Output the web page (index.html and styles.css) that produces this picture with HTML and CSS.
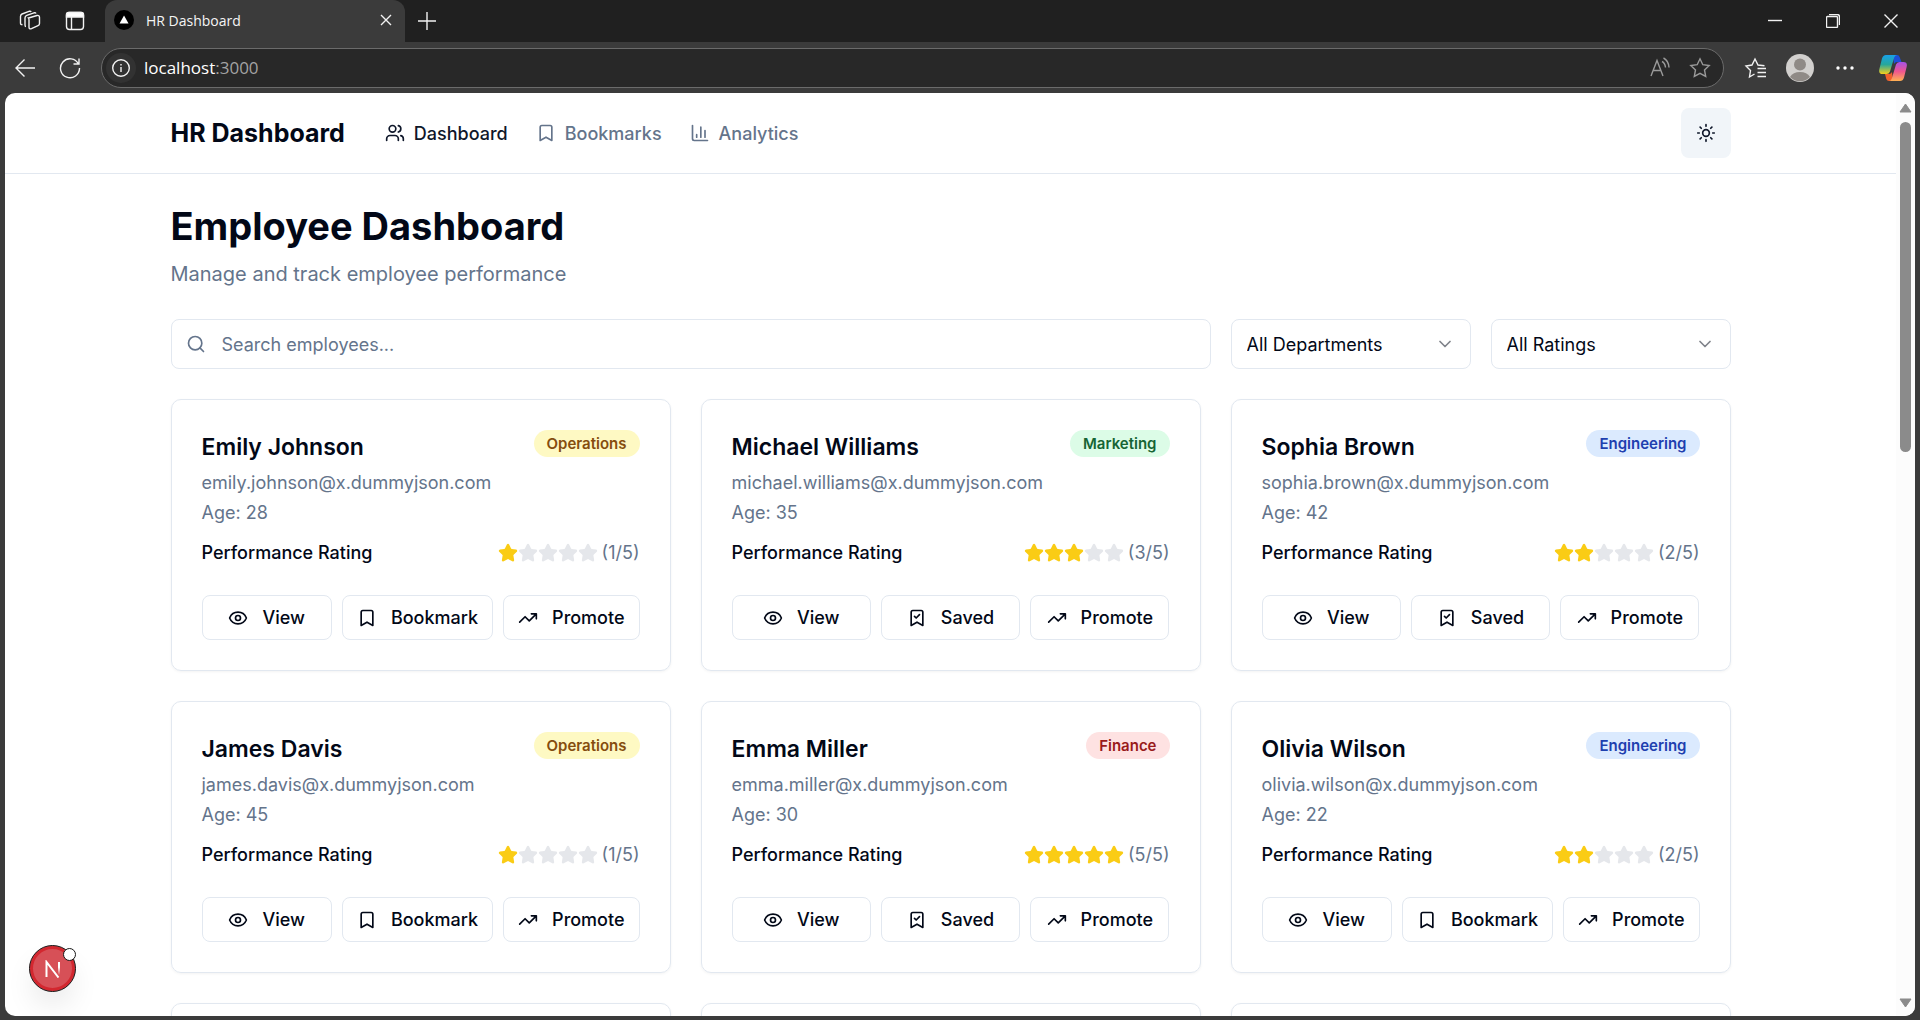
FILE: index.html
```html
<!DOCTYPE html>
<html lang="en">
<head>
<meta charset="utf-8">
<title>HR Dashboard</title>
<link rel="stylesheet" href="styles.css">
</head>
<body>
<svg class="sprite" aria-hidden="true">
  <symbol id="users" viewBox="0 0 24 24"><path d="M16 21v-2a4 4 0 0 0-4-4H6a4 4 0 0 0-4 4v2"/><circle cx="9" cy="7" r="4"/><path d="M22 21v-2a4 4 0 0 0-3-3.87M16 3.13a4 4 0 0 1 0 7.75"/></symbol>
  <symbol id="bookmark" viewBox="0 0 24 24"><path d="m19 21-7-4-7 4V5a2 2 0 0 1 2-2h10a2 2 0 0 1 2 2v16z"/></symbol>
  <symbol id="saved" viewBox="0 0 24 24"><path d="m19 21-7-4-7 4V5a2 2 0 0 1 2-2h10a2 2 0 0 1 2 2zM9 10l2 2 4-4"/></symbol>
  <symbol id="chart" viewBox="0 0 24 24"><path d="M3 3v16a2 2 0 0 0 2 2h16M18 17V9M13 17V5M8 17v-3"/></symbol>
  <symbol id="sun" viewBox="0 0 24 24"><circle cx="12" cy="12" r="4"/><path d="M12 2v2M12 20v2M4.93 4.93l1.41 1.41M17.66 17.66l1.41 1.41M2 12h2M20 12h2M6.34 17.66l-1.41 1.41M19.07 4.93l-1.41 1.41"/></symbol>
  <symbol id="search" viewBox="0 0 24 24"><circle cx="11" cy="11" r="8"/><path d="m21 21-4.3-4.3"/></symbol>
  <symbol id="chevron" viewBox="0 0 24 24"><path d="m6 9 6 6 6-6"/></symbol>
  <symbol id="eye" viewBox="0 0 24 24"><path d="M2.06 12.35a1 1 0 0 1 0-.7 10.75 10.75 0 0 1 19.88 0 1 1 0 0 1 0 .7 10.75 10.75 0 0 1-19.88 0"/><circle cx="12" cy="12" r="3"/></symbol>
  <symbol id="trend" viewBox="0 0 24 24"><path d="M22 7l-8.5 8.5-5-5L2 17M16 7h6v6"/></symbol>
  <symbol id="star" viewBox="0 0 24 24"><path d="M11.53 2.3a.53.53 0 0 1 .95 0l2.31 4.67a2.12 2.12 0 0 0 1.6 1.17l5.16.75a.53.53 0 0 1 .29.91l-3.73 3.63a2.12 2.12 0 0 0-.61 1.88l.88 5.14a.53.53 0 0 1-.77.56l-4.62-2.43a2.12 2.12 0 0 0-1.97 0L6.4 21.01a.53.53 0 0 1-.77-.56l.88-5.14a2.12 2.12 0 0 0-.61-1.88L2.16 9.8a.53.53 0 0 1 .3-.91l5.16-.76a2.12 2.12 0 0 0 1.6-1.16z"/></symbol>
</svg>

<div class="tabstrip">
  <button class="chrome-btn workspaces" aria-label="Workspaces"><svg viewBox="0 0 22 22"><path d="M9.500 8l8.500-2.500q2.500-.6 2.500 2v6q0 1.500-1.500 2.200l-6.500 3q-2.500.8-2.500-1.800v-7q0-1.500-.5-1.900zM7 16.500q-1 0-1-1.500V8q0-2 1.800-2.700L15 2.800q1.500-.4 2 .7M3.500 14.500Q1.500 15 1.500 13V6.500q0-1.800 1.500-2.500l7-2.700q1.500-.4 2.300.5"/></svg></button>
  <button class="chrome-btn" aria-label="Tab actions"><svg viewBox="0 0 22 22"><rect x="2.500" y="2.500" width="17" height="17" rx="3"/><path d="M2.500 4.500q0-2 2-2h13q2 0 2 2V7h-17z" fill="#fff"/><path d="M7.500 7v12"/></svg></button>
  <div class="tab">
    <svg class="favicon" viewBox="0 0 20 20"><circle cx="10" cy="10" r="10"/><path d="M10 5.500l4.500 8h-9z" fill="#fff"/></svg>
    <span class="tab-title">HR Dashboard</span>
    <button class="chrome-btn small" aria-label="Close tab"><svg viewBox="0 0 12 12"><path d="M1 1l10 10M11 1L1 11"/></svg></button>
  </div>
  <button class="chrome-btn plus" aria-label="New tab"><svg viewBox="0 0 18 18"><path d="M9 0v18M0 9h18"/></svg></button>
  <div class="window-controls">
    <button class="chrome-btn tiny" aria-label="Minimize"><svg viewBox="0 0 14 14"><path d="M0 6.500h14"/></svg></button>
    <button class="chrome-btn tiny" aria-label="Restore"><svg viewBox="0 0 14 14"><rect x=".5" y="2.500" width="11" height="11" rx="1"/><path d="M3 .5h8q2.500 0 2.500 2.500v8"/></svg></button>
    <button class="chrome-btn tiny" aria-label="Close"><svg viewBox="0 0 14 14"><path d="M.5.5l13 13M13.500.5l-13 13"/></svg></button>
  </div>
</div>

<div class="toolbar">
  <button class="chrome-btn back" aria-label="Back"><svg viewBox="0 0 22 22"><path d="M21 11H2M10.500 2.500L2 11l8.500 8.500"/></svg></button>
  <button class="chrome-btn" aria-label="Refresh"><svg viewBox="0 0 22 22"><path d="M19.500 7A9.500 9.500 0 1 0 20.500 11M20 1.500V7h-5.500"/></svg></button>
  <div class="address">
    <span class="site-info"><svg viewBox="0 0 18 18"><circle cx="9" cy="9" r="8.300"/><path d="M9 8v5M9 5v1.500"/></svg></span>
    <span class="url">localhost<span class="port">:3000</span></span>
    <button class="chrome-btn dim" aria-label="Read aloud"><svg viewBox="0 0 22 22"><path d="M2 19L8 3.500 14 19M4.200 13.500h7.600M13 4.500q3 1.500 3.500 6M14.500 1q5 2.500 5.500 9.500"/></svg></button>
    <button class="chrome-btn dim" aria-label="Add to favorites"><svg viewBox="0 0 22 22"><path d="M11 1.800l2.800 5.900 6.400.8-4.700 4.500 1.200 6.400L11 16.300l-5.700 3.100L6.500 13 1.800 8.500l6.400-.8z"/></svg></button>
  </div>
  <button class="chrome-btn" aria-label="Favorites"><svg viewBox="0 0 22 22"><path d="M10.500 17l-5 3 1-6.500L2 9l6-1 3-6 3 6 6.500.8M13.500 11.500H22M13.500 15.500H22M13.500 19.500H22"/></svg></button>
  <button class="chrome-btn avatar" aria-label="Profile"><svg viewBox="0 0 28 28"><circle cx="14" cy="14" r="14" fill="#d2d0ce"/><circle cx="14" cy="10.500" r="6" fill="#8f8a86"/><path d="M4 23q3-5 10-5t10 5a14 14 0 0 1-20 0z" fill="#8f8a86"/></svg></button>
  <button class="chrome-btn" aria-label="Settings and more"><svg viewBox="0 0 22 22"><g fill="#fff" stroke="none"><circle cx="4" cy="11" r="1.700"/><circle cx="11" cy="11" r="1.700"/><circle cx="18" cy="11" r="1.700"/></g></svg></button>
  <button class="chrome-btn copilot" aria-label="Copilot"><svg viewBox="0 0 28 28">
    <defs>
      <linearGradient id="cool" x1="0" y1="0" x2="0" y2="1"><stop offset="0" stop-color="#18a0e8"/><stop offset=".5" stop-color="#27a79b"/><stop offset="1" stop-color="#f5cf1c"/></linearGradient>
      <linearGradient id="warm" x1="0" y1="0" x2="0" y2="1"><stop offset="0" stop-color="#a552e8"/><stop offset=".5" stop-color="#ef568f"/><stop offset="1" stop-color="#ffb152"/></linearGradient>
    </defs>
    <g stroke="none"><path d="M14 1h4q2 0 2.700 2.200L22.500 8H18q-2 0-3 2z" fill="#1c4fd8"/><path d="M14 27h-4q-2 0-2.700-2L6 20h4q2 0 3-2z" fill="#f0602c"/><path d="M7 1h11q-2 0-2.800 2.500L11 17.500Q10 20 7.500 20H3.500Q-1 20 .5 14.500L3 4.500Q4 1 7 1z" fill="url(#cool)"/><path d="M21 27H10q2 0 2.800-2.500L17 10.500Q18 8 20.500 8h4q4.500 0 3 5.500L25 23.500Q24 27 21 27z" fill="url(#warm)"/></g></svg></button>
</div>

<div class="viewport">
  <div class="page">
    <header class="site-header">
      <div class="container header-row">
        <a class="brand" href="#">HR Dashboard</a>
        <nav class="nav">
          <a class="active" href="#"><svg class="icon"><use href="#users"/></svg>Dashboard</a>
          <a href="#"><svg class="icon"><use href="#bookmark"/></svg>Bookmarks</a>
          <a href="#"><svg class="icon"><use href="#chart"/></svg>Analytics</a>
        </nav>
        <button class="theme-toggle" aria-label="Toggle theme"><svg class="icon"><use href="#sun"/></svg></button>
      </div>
    </header>
    <main class="container main">
      <div class="intro">
        <h1>Employee Dashboard</h1>
        <p>Manage and track employee performance</p>
      </div>
      <div class="filters">
        <div class="search"><svg class="icon"><use href="#search"/></svg><input type="text" placeholder="Search employees..." aria-label="Search employees"></div>
        <div class="select"><select aria-label="Department"><option>All Departments</option></select><svg class="icon"><use href="#chevron"/></svg></div>
        <div class="select"><select aria-label="Rating"><option>All Ratings</option></select><svg class="icon"><use href="#chevron"/></svg></div>
      </div>
      <div class="grid" id="grid"></div>
    </main>
  </div>
  <div class="scrollbar" aria-hidden="true">
    <svg viewBox="0 0 13 10"><path d="M6.500 1L12 9H1z"/></svg>
    <div class="track"><div class="thumb"></div></div>
    <svg viewBox="0 0 13 10"><path d="M6.500 9L1 1h11z"/></svg>
  </div>
  <button class="dev-badge" aria-label="Open developer tools">
    <svg viewBox="0 0 18 18"><defs><linearGradient id="fade" x1="0" y1="0" x2="0" y2="1"><stop offset=".4" stop-color="#fff"/><stop offset="1" stop-color="#fff" stop-opacity="0"/></linearGradient></defs><path d="M2.500 17V2l12 15.500" fill="none" stroke="#fff" stroke-width="2"/><path d="M14 2h2v13h-2z" fill="url(#fade)"/></svg>
    <span class="dot"></span>
  </button>
</div>
<script src="script.js"></script>
</body>
</html>
```
FILE: styles.css
```css
* { box-sizing: border-box; }

body {
  margin: 0;
  height: 100vh;
  display: flex;
  flex-direction: column;
  overflow: hidden;
  background: #3b3b3b;
  color: #020817;
  font-family: Inter, "Liberation Sans", sans-serif;
  font-size: 18px;
  line-height: 25px;
}

h1, h2, p { margin: 0; }
button, input, select { font: inherit; color: inherit; }
a { color: inherit; text-decoration: none; }
.sprite { position: absolute; width: 0; height: 0; }

/* Browser frame */
.tabstrip {
  display: flex;
  align-items: center;
  height: 42px;
  flex: none;
  background: #202020;
  padding-left: 19px;
  font-family: "Open Sans", "Noto Sans", sans-serif;
}
.chrome-btn {
  display: flex;
  align-items: center;
  justify-content: center;
  flex: none;
  width: 22px;
  height: 22px;
  padding: 0;
  border: 0;
  background: none;
}
.chrome-btn svg { width: 100%; height: 100%; fill: none; stroke: #f2f2f2; stroke-width: 1.4; }
.workspaces { margin-right: 23px; }
.chrome-btn.small { width: 12px; height: 12px; }
.chrome-btn.plus { width: 18px; height: 18px; margin-left: 13px; }
.tab {
  display: flex;
  align-items: center;
  align-self: stretch;
  width: 300px;
  margin-left: 19px;
  padding: 0 13px 2px 9px;
  border-radius: 12px 12px 0 0;
  background: #3b3b3b;
  color: #f5f5f5;
  font-size: 14px;
}
.favicon { width: 20px; height: 20px; margin-right: 12px; }
.tab-title { flex: 1; }
.window-controls { display: flex; gap: 44px; margin-left: auto; padding-right: 22px; }
.chrome-btn.tiny { width: 14px; height: 14px; }

.toolbar {
  display: flex;
  align-items: center;
  height: 51px;
  flex: none;
  gap: 20px;
  padding: 0 13px 0 14px;
}
.back { margin-right: 3px; }
.address {
  flex: 1;
  display: flex;
  align-items: center;
  height: 40px;
  padding: 0 12px 0 4px;
  border: 1px solid #6b6b6b;
  border-radius: 20px;
  background: #282828;
  font-family: "Open Sans", "Noto Sans", sans-serif;
}
.site-info {
  display: flex;
  align-items: center;
  justify-content: center;
  width: 30px;
  height: 30px;
  margin-right: 8px;
  border-radius: 15px;
  background: #323232;
}
.site-info svg { width: 18px; height: 18px; fill: none; stroke: #f2f2f2; stroke-width: 1.4; }
.url { flex: 1; color: #fff; font-size: 17px; }
.port { color: #a3a3a3; }
.dim { margin-left: 18px; }
.dim svg { stroke: #9a9a9a; }
.avatar, .copilot { width: 28px; height: 28px; }
.avatar svg { stroke: none; }
.copilot { margin-left: 3px; }

/* Page area */
.viewport {
  position: relative;
  flex: 1;
  min-height: 0;
  display: flex;
  margin: 0 5px 4px;
  overflow: hidden;
  border-radius: 10px;
  background: #fff;
}
.page { flex: 1; overflow: hidden; }
.container { max-width: 1600px; margin: 0 auto; padding: 0 20px; }
.icon {
  width: 20px;
  height: 20px;
  flex: none;
  fill: none;
  stroke: currentColor;
  stroke-width: 2;
  stroke-linecap: round;
  stroke-linejoin: round;
}

.site-header { border-bottom: 1px solid #e2e8f0; }
.header-row { display: flex; align-items: center; height: 80px; }
.brand { font-size: 25px; font-weight: 700; line-height: 35px; }
.nav { display: flex; gap: 28px; margin-left: 40px; color: #64748b; font-weight: 500; }
.nav a { display: flex; align-items: center; gap: 9px; }
.nav .active { color: #0f172a; }
.theme-toggle {
  display: flex;
  align-items: center;
  justify-content: center;
  width: 50px;
  height: 50px;
  margin-left: auto;
  padding: 0;
  border: 0;
  border-radius: 8px;
  background: #f1f5f9;
  color: #0f172a;
}

.main { display: grid; gap: 30px; padding-top: 30px; padding-bottom: 30px; }
.intro { display: grid; gap: 10px; }
h1 { font-size: 38px; font-weight: 700; line-height: 45px; }
.intro p { color: #64748b; font-size: 20px; line-height: 30px; }

.filters { display: flex; gap: 20px; }
.search { position: relative; flex: 1; }
.search input {
  display: block;
  width: 100%;
  height: 50px;
  padding: 0 15px 0 50px;
  border: 1px solid #e2e8f0;
  border-radius: 8px;
  background: #fff;
}
.search input::placeholder { color: #64748b; opacity: 1; }
.search .icon { position: absolute; left: 15px; top: 15px; color: #64748b; }
.select { position: relative; width: 240px; }
.select select {
  display: block;
  width: 100%;
  height: 50px;
  padding: 0 15px;
  appearance: none;
  border: 1px solid #e2e8f0;
  border-radius: 8px;
  background: #fff;
}
.select .icon { position: absolute; right: 16px; top: 15px; opacity: 0.5; pointer-events: none; }

.grid { display: grid; grid-template-columns: repeat(3, 1fr); gap: 30px; }
.card {
  min-height: 272px;
  padding: 30px;
  border: 1px solid #e2e8f0;
  border-radius: 10px;
  box-shadow: 0 1px 3px rgba(0, 0, 0, 0.05);
}
.card-top { display: flex; justify-content: space-between; align-items: flex-start; }
.card h2 { font-size: 23px; font-weight: 600; line-height: 35px; }
.badge {
  padding: 4px 13px 3px;
  border-radius: 14px;
  font-size: 15px;
  font-weight: 600;
  line-height: 20px;
}
.operations { background: #fef9c3; color: #854d0e; }
.marketing { background: #dcfce7; color: #166534; }
.engineering { background: #dbeafe; color: #1e40af; }
.finance { background: #fee2e2; color: #991b1b; }
.muted { margin-top: 5px; color: #64748b; }
.rating { display: flex; justify-content: space-between; margin-top: 15px; }
.rating-name { font-weight: 500; }
.stars { display: flex; align-items: center; color: #64748b; }
.star { color: #e5e7eb; fill: currentColor; }
.star.on { color: #facc15; }
.score { margin-left: 4px; }
.actions { display: flex; gap: 10px; margin-top: 30px; }
.actions button {
  flex: 1;
  display: flex;
  align-items: center;
  justify-content: center;
  gap: 14px;
  height: 45px;
  padding: 0 14px;
  border: 1px solid #e2e8f0;
  border-radius: 8px;
  background: #fff;
  font-weight: 500;
}

/* Overlays */
.scrollbar {
  display: flex;
  flex-direction: column;
  align-items: center;
  width: 19px;
  padding: 10px 0 8px;
  background: #fcfcfc;
}
.scrollbar svg { width: 13px; height: 10px; fill: #8b8b8b; stroke: #8b8b8b; stroke-linejoin: round; }
.track { flex: 1; padding-top: 9px; }
.thumb { width: 11px; height: 330px; border-radius: 6px; background: #8b8b8b; }
.dev-badge {
  position: absolute;
  left: 24px;
  bottom: 24px;
  display: flex;
  align-items: center;
  justify-content: center;
  width: 47px;
  height: 47px;
  padding: 0;
  border: 1px solid #171717;
  border-radius: 50%;
  background: #d75057;
  box-shadow: inset 0 0 0 3px #d3272f, 0 16px 32px -8px rgba(0, 0, 0, 0.16);
}
.dev-badge svg { width: 18px; height: 18px; }
.dot {
  position: absolute;
  top: 2px;
  right: -1px;
  width: 13px;
  height: 13px;
  border: 1px solid #171717;
  border-radius: 50%;
  background: #fff;
}
```
FILE: script.js
```js
const employees = [
  { name: "Emily Johnson", age: 28, dept: "Operations", rating: 1, saved: false },
  { name: "Michael Williams", age: 35, dept: "Marketing", rating: 3, saved: true },
  { name: "Sophia Brown", age: 42, dept: "Engineering", rating: 2, saved: true },
  { name: "James Davis", age: 45, dept: "Operations", rating: 1, saved: false },
  { name: "Emma Miller", age: 30, dept: "Finance", rating: 5, saved: true },
  { name: "Olivia Wilson", age: 22, dept: "Engineering", rating: 2, saved: false },
];

const icon = (id, cls = "") => `<svg class="icon ${cls}"><use href="#${id}"/></svg>`;

const card = (e) => `
  <article class="card">
    <div class="card-top"><h2>${e.name}</h2><span class="badge ${e.dept.toLowerCase()}">${e.dept}</span></div>
    <p class="muted">${e.name.toLowerCase().replace(" ", ".")}@x.dummyjson.com</p>
    <p class="muted">Age: ${e.age}</p>
    <div class="rating">
      <span class="rating-name">Performance Rating</span>
      <span class="stars">${[1, 2, 3, 4, 5].map((n) => icon("star", n <= e.rating ? "star on" : "star")).join("")}<span class="score">(${e.rating}/5)</span></span>
    </div>
    <div class="actions">
      <button>${icon("eye")}View</button>
      <button>${e.saved ? icon("saved") + "Saved" : icon("bookmark") + "Bookmark"}</button>
      <button>${icon("trend")}Promote</button>
    </div>
  </article>`;

document.getElementById("grid").innerHTML =
  employees.map(card).join("") + '<article class="card"></article>'.repeat(3);
```
